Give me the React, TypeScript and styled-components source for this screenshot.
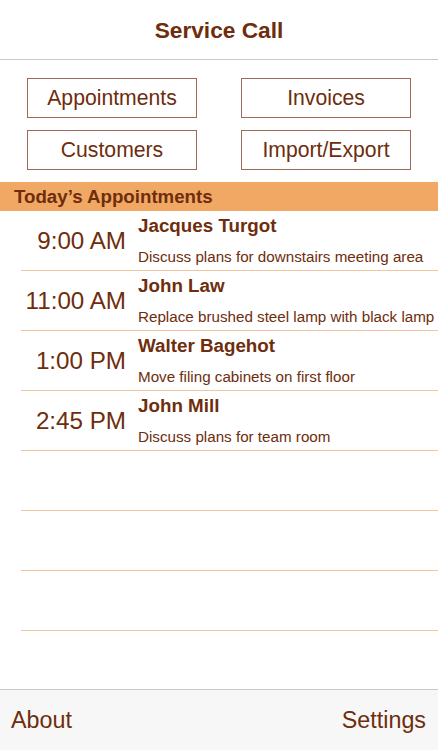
import styled, { createGlobalStyle } from "styled-components";

const GlobalStyle = createGlobalStyle`
  html, body {
    margin: 0;
    padding: 0;
    background: #ffffff;
  }
  body {
    font-family: "Liberation Sans", Arial, sans-serif;
    color: #6e2d0d;
  }
`;

const Screen = styled.div`
  width: 438px;
  height: 750px;
  display: flex;
  flex-direction: column;
  background: #fff;
  overflow: hidden;
`;

const Header = styled.div`
  height: 60px;
  flex: none;
  display: flex;
  align-items: center;
  justify-content: center;
  border-bottom: 1px solid #c9c9c9;
  box-sizing: border-box;
  font-size: 22.7px;
  font-weight: bold;
  padding-top: 2px;
`;

const ButtonGrid = styled.div`
  display: grid;
  grid-template-columns: 170px 170px;
  column-gap: 44px;
  row-gap: 12px;
  padding: 18px 0 12px 27px;
`;

const MenuButton = styled.button`
  height: 40px;
  border: 1px solid #9c6a57;
  background: #fff;
  color: #6e2d0d;
  font-family: "Liberation Sans", Arial, sans-serif;
  font-size: 21.2px;
  padding: 0;
  cursor: pointer;
`;

const SectionBar = styled.div`
  height: 29px;
  flex: none;
  background: #f2a865;
  display: flex;
  align-items: center;
  padding-left: 14px;
  font-size: 18.7px;
  font-weight: bold;
`;

const List = styled.div`
  flex: 1;
  display: flex;
  flex-direction: column;
`;

const Row = styled.div`
  height: 60px;
  flex: none;
  margin-left: 21px;
  border-bottom: 1px solid #f0c6a0;
  box-sizing: border-box;
  display: flex;
  align-items: stretch;
  white-space: nowrap;
  overflow: hidden;
`;

const Time = styled.div`
  flex: 0 0 105px;
  min-width: 0;
  font-size: 24.2px;
  display: flex;
  align-items: center;
  justify-content: flex-end;
  padding-top: 1px;
`;

const Details = styled.div`
  padding-left: 12px;
  display: flex;
  flex-direction: column;
  min-width: 0;
`;

const Name = styled.div`
  font-size: 18.8px;
  font-weight: bold;
  margin-top: 4px;
`;

const Note = styled.div`
  font-size: 15.2px;
  margin-top: 11px;
`;

const Footer = styled.div`
  height: 61px;
  flex: none;
  background: #f7f7f7;
  border-top: 1px solid #c9c9c9;
  box-sizing: border-box;
  display: flex;
  align-items: center;
  justify-content: space-between;
  padding: 0 12px 0 11px;
  font-size: 23.3px;
`;

const appointments = [
  { time: "9:00 AM", name: "Jacques Turgot", note: "Discuss plans for downstairs meeting area" },
  { time: "11:00 AM", name: "John Law", note: "Replace brushed steel lamp with black lamp" },
  { time: "1:00 PM", name: "Walter Bagehot", note: "Move filing cabinets on first floor" },
  { time: "2:45 PM", name: "John Mill", note: "Discuss plans for team room" },
];

export default function App() {
  return (
    <Screen>
      <GlobalStyle />
      <Header>Service Call</Header>
      <ButtonGrid>
        <MenuButton>Appointments</MenuButton>
        <MenuButton>Invoices</MenuButton>
        <MenuButton>Customers</MenuButton>
        <MenuButton>Import/Export</MenuButton>
      </ButtonGrid>
      <SectionBar>Today’s Appointments</SectionBar>
      <List>
        {appointments.map((a) => (
          <Row key={a.time}>
            <Time>{a.time}</Time>
            <Details>
              <Name>{a.name}</Name>
              <Note>{a.note}</Note>
            </Details>
          </Row>
        ))}
        <Row />
        <Row />
        <Row />
      </List>
      <Footer>
        <span>About</span>
        <span>Settings</span>
      </Footer>
    </Screen>
  );
}
